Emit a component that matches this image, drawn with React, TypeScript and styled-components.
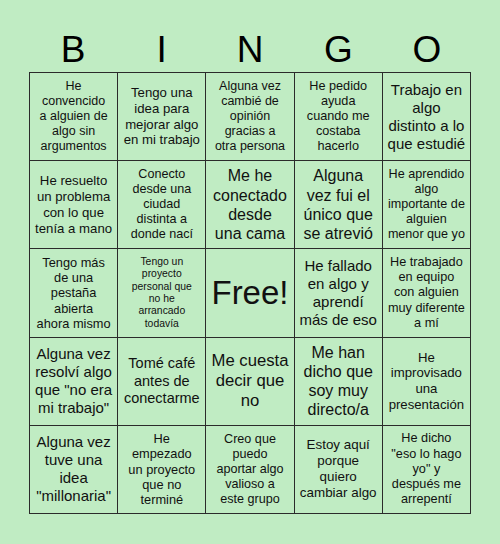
import React from "react";
import styled, { createGlobalStyle } from "styled-components";

const GlobalStyle = createGlobalStyle`
  html, body {
    margin: 0;
    padding: 0;
    background: #c0ecc3;
  }
  body {
    font-family: "Liberation Sans", Arial, sans-serif;
    color: #111;
  }
`;

const Page = styled.div`
  width: 500px;
  height: 544px;
  box-sizing: border-box;
  padding-top: 29px;
  background: #c0ecc3;
  display: flex;
  flex-direction: column;
  align-items: center;
`;

const Header = styled.div`
  width: 442px;
  height: 43px;
  display: grid;
  grid-template-columns: repeat(5, 1fr);
`;

const Letter = styled.div`
  font-size: 37px;
  line-height: 42px;
  text-align: center;
  color: #000;
`;

const Board = styled.div`
  width: 442px;
  height: 442px;
  box-sizing: border-box;
  display: grid;
  grid-template-columns: repeat(5, 1fr);
  grid-template-rows: repeat(5, 1fr);
  border-top: 1px solid #2b2b2b;
  border-left: 1px solid #2b2b2b;
`;

const Cell = styled.div<{ $size: number }>`
  box-sizing: border-box;
  border-right: 1px solid #2b2b2b;
  border-bottom: 1px solid #2b2b2b;
  display: flex;
  flex-direction: column;
  align-items: center;
  justify-content: center;
  text-align: center;
  padding: 1px 0;
  font-size: ${(p) => p.$size}px;
  line-height: 1.2;
  color: #111;
  overflow: hidden;
`;

const Line = styled.span`
  display: block;
  white-space: nowrap;
`;

const cells: [string[], number][] = [
  [["He", "convencido", "a alguien de", "algo sin", "argumentos"], 12.5],
  [["Tengo una", "idea para", "mejorar algo", "en mi trabajo"], 13.2],
  [["Alguna vez", "cambié de", "opinión", "gracias a", "otra persona"], 12.5],
  [["He pedido", "ayuda", "cuando me", "costaba", "hacerlo"], 12.7],
  [["Trabajo en", "algo", "distinto a lo", "que estudié"], 15],
  [["He resuelto", "un problema", "con lo que", "tenía a mano"], 13.2],
  [["Conecto", "desde una", "ciudad", "distinta a", "donde nací"], 12.6],
  [["Me he", "conectado", "desde", "una cama"], 16],
  [["Alguna", "vez fui el", "único que", "se atrevió"], 16],
  [["He aprendido", "algo", "importante de", "alguien", "menor que yo"], 12.6],
  [["Tengo más", "de una", "pestaña", "abierta", "ahora mismo"], 12.8],
  [["Tengo un", "proyecto", "personal que", "no he", "arrancado", "todavía"], 10.4],
  [["Free!"], 33],
  [["He fallado", "en algo y", "aprendí", "más de eso"], 15],
  [["He trabajado", "en equipo", "con alguien", "muy diferente", "a mí"], 12.7],
  [["Alguna vez", "resolví algo", "que \"no era", "mi trabajo\""], 15],
  [["Tomé café", "antes de", "conectarme"], 14.5],
  [["Me cuesta", "decir que", "no"], 16.7],
  [["Me han", "dicho que", "soy muy", "directo/a"], 16],
  [["He", "improvisado", "una", "presentación"], 13.2],
  [["Alguna vez", "tuve una", "idea", "\"millonaria\""], 15],
  [["He", "empezado", "un proyecto", "que no", "terminé"], 12.8],
  [["Creo que", "puedo", "aportar algo", "valioso a", "este grupo"], 12.6],
  [["Estoy aquí", "porque", "quiero", "cambiar algo"], 13.4],
  [["He dicho", "\"eso lo hago", "yo\" y", "después me", "arrepentí"], 12.7],
];

export default function App() {
  return (
    <Page>
      <GlobalStyle />
      <Header>
        {["B", "I", "N", "G", "O"].map((l) => (
          <Letter key={l}>{l}</Letter>
        ))}
      </Header>
      <Board>
        {cells.map(([lines, s], i) => (
          <Cell key={i} $size={s}>
            {lines.map((l, j) => (
              <Line key={j}>{l}</Line>
            ))}
          </Cell>
        ))}
      </Board>
    </Page>
  );
}
